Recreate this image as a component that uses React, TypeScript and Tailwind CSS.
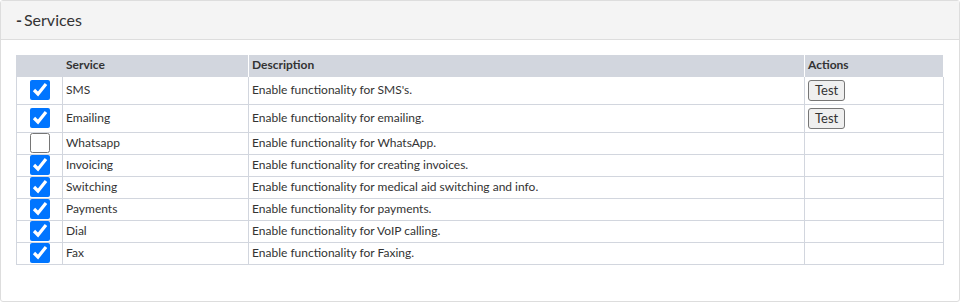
type Service = {
  name: string
  description: string
  enabled: boolean
  testable?: boolean
}

const services: Service[] = [
  { name: 'SMS', description: "Enable functionality for SMS's.", enabled: true, testable: true },
  { name: 'Emailing', description: 'Enable functionality for emailing.', enabled: true, testable: true },
  { name: 'Whatsapp', description: 'Enable functionality for WhatsApp.', enabled: false },
  { name: 'Invoicing', description: 'Enable functionality for creating invoices.', enabled: true },
  { name: 'Switching', description: 'Enable functionality for medical aid switching and info.', enabled: true },
  { name: 'Payments', description: 'Enable functionality for payments.', enabled: true },
  { name: 'Dial', description: 'Enable functionality for VoIP calling.', enabled: true },
  { name: 'Fax', description: 'Enable functionality for Faxing.', enabled: true },
]

export default function App() {
  return (
    <div className="h-[302px] w-[960px] bg-white font-['Lato',sans-serif] text-[#333]">
      <div className="flex h-full flex-col rounded-[3px] border border-[#ddd]">
        <div className="flex h-[39px] items-center border-b border-[#ddd] bg-[#f4f4f4] px-[15px] pb-px text-[16px]">
          <span className="font-bold">-</span>
          <span className="ml-[2px]">Services</span>
        </div>

        <div className="px-[15px] pt-[15px]">
          <table className="w-full table-fixed border-collapse text-[12px] leading-[16px]">
            <colgroup>
              <col className="w-[46px]" />
              <col className="w-[186px]" />
              <col className="w-[556px]" />
              <col />
            </colgroup>
            <thead>
              <tr className="h-[21px] bg-[#d2d6de] text-left font-bold">
                <th className="border-x border-[#d2d6de] p-0 px-[3px]" />
                <th className="border-x border-[#fff] p-0 px-[3px]">Service</th>
                <th className="border-x border-[#fff] p-0 px-[3px]">Description</th>
                <th className="border-x border-[#fff] p-0 px-[3px]">Actions</th>
              </tr>
            </thead>
            <tbody>
              {services.map((s) => (
                <tr key={s.name} className="h-[22px]">
                  <td className="border border-[#d2d6de] p-0 text-center align-middle">
                    <input
                      type="checkbox"
                      defaultChecked={s.enabled}
                      className="m-0 block mx-auto h-5 w-5 accent-[#0075ff]"
                    />
                  </td>
                  <td className="border border-[#d2d6de] p-0 px-[3px] align-middle">{s.name}</td>
                  <td className="border border-[#d2d6de] p-0 px-[3px] align-middle">{s.description}</td>
                  <td className="border border-[#d2d6de] p-0 px-[2px] align-middle">
                    {s.testable && (
                      <button
                        type="button"
                        className="my-[3px] ml-px block h-[21px] rounded-[3px] border border-[#767676] bg-[#efefef] px-[6px] text-[13px] leading-none"
                      >
                        Test
                      </button>
                    )}
                  </td>
                </tr>
              ))}
            </tbody>
          </table>
        </div>
      </div>
    </div>
  )
}
